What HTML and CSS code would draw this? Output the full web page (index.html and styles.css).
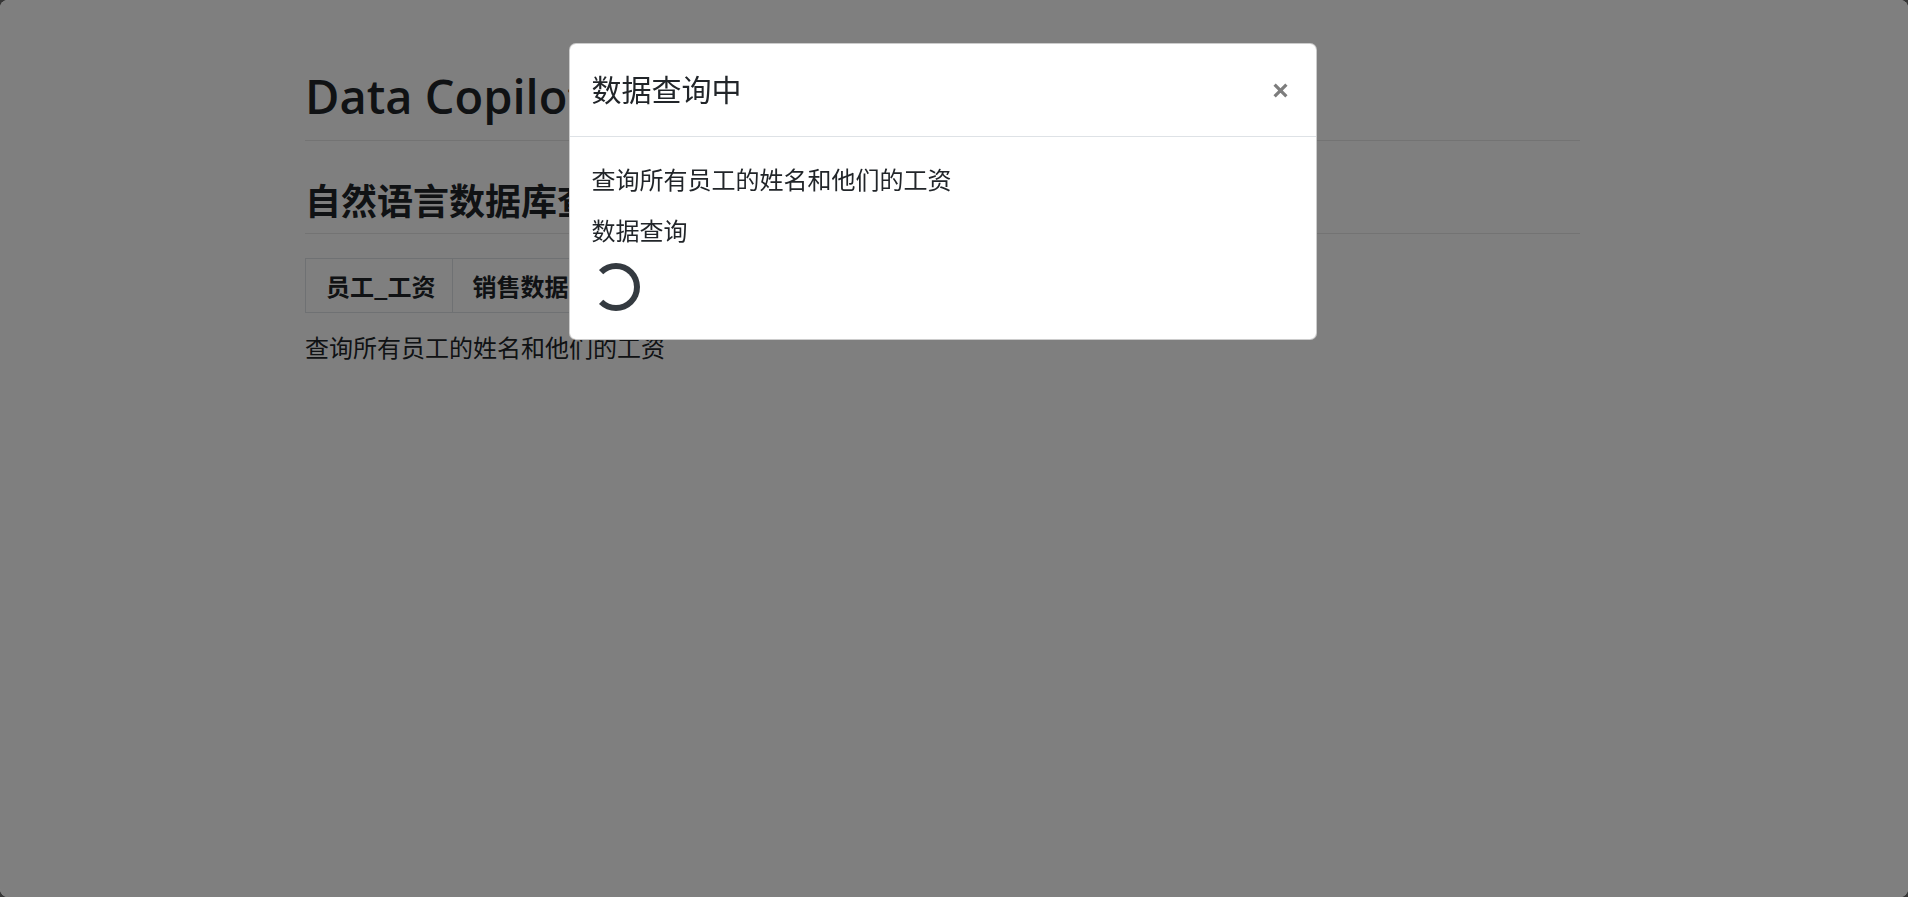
FILE: index.html
```html
<!DOCTYPE html>
<html lang="zh-CN">
<head>
<meta charset="utf-8">
<title>Data Copilot</title>
<link rel="stylesheet" href="styles.css">
</head>
<body>
<div class="page">
  <main class="container">
    <h1 class="title">Data Copilot</h1>
    <h2 class="subtitle">自然语言数据库查询</h2>
    <ul class="tabs">
      <li class="tab">员工_工资</li>
      <li class="tab">销售数据</li>
    </ul>
    <p class="query">查询所有员工的姓名和他们的工资</p>
  </main>
</div>

<div class="backdrop"></div>

<div class="modal">
  <div class="modal-dialog">
    <div class="modal-header">
      <h5 class="modal-title">数据查询中</h5>
      <button class="close" type="button" aria-label="Close">
        <svg width="15" height="15" viewBox="0 0 15 15"><path d="M1.6 1.6 L13.4 13.4 M13.4 1.6 L1.6 13.4" stroke="#7d7d7d" stroke-width="3.2" stroke-linecap="butt"/></svg>
      </button>
    </div>
    <div class="modal-body">
      <p class="modal-line">查询所有员工的姓名和他们的工资</p>
      <p class="modal-line">数据查询</p>
      <div class="spinner"></div>
    </div>
  </div>
</div>
</body>
</html>
```

FILE: styles.css
```css
html {
  background: #363636;
}
body {
  margin: 0;
  min-height: 100vh;
  background: #ffffff;
  border-radius: 8px;
  color: #212529;
  font-family: "Noto Sans CJK SC", sans-serif;
  overflow: hidden;
}
.page {
  padding-right: 23px;
}
.container {
  max-width: 1275px;
  margin: 0 auto;
  padding-top: 68px;
}
.title {
  margin: 0;
  font-family: "Open Sans", "Noto Sans CJK SC", sans-serif;
  font-weight: 600;
  font-size: 47px;
  line-height: 57.6px;
  padding-bottom: 14px;
  border-bottom: 1px solid #e6e6e6;
}
.subtitle {
  margin: 37px 0 0;
  font-size: 36px;
  font-weight: 700;
  line-height: 43.2px;
  padding-bottom: 12px;
  border-bottom: 1px solid #e6e6e6;
}
.tabs {
  list-style: none;
  margin: 24px 0 0;
  padding: 0;
  display: flex;
}
.tab {
  border: 1px solid #dee2e6;
  padding: 12px 16px 12px 20px;
  font-size: 24px;
  font-weight: 700;
  line-height: 29px;
}
.tab + .tab {
  border-left: none;
}
.query {
  margin: 16px 0 0;
  font-size: 24px;
  line-height: 36px;
}
.backdrop {
  position: fixed;
  inset: 0;
  background: rgba(0, 0, 0, 0.5);
  border-radius: 8px;
}
.modal {
  position: fixed;
  inset: 0;
  padding-right: 23px;
  display: flex;
  justify-content: center;
  align-items: flex-start;
}
.modal-dialog {
  width: 748px;
  margin-top: 43px;
  background: #ffffff;
  border: 1px solid rgba(0, 0, 0, 0.2);
  border-radius: 7px;
  box-sizing: border-box;
}
.modal-header {
  display: flex;
  align-items: center;
  justify-content: space-between;
  padding: 22px 28px 25px 22px;
  border-bottom: 1px solid #dee2e6;
}
.modal-title {
  margin: 0;
  font-size: 30px;
  font-weight: 400;
  line-height: 45px;
}
.close {
  border: 0;
  background: transparent;
  padding: 0;
  margin-top: 4px;
  width: 15px;
  height: 15px;
  display: flex;
}
.modal-body {
  padding: 24px 22px 28px;
}
.modal-line {
  margin: 0 0 15px;
  font-size: 24px;
  line-height: 36px;
}
.spinner {
  width: 48px;
  height: 48px;
  box-sizing: border-box;
  border: 6px solid #343a40;
  border-left-color: transparent;
  border-radius: 50%;
}
```
